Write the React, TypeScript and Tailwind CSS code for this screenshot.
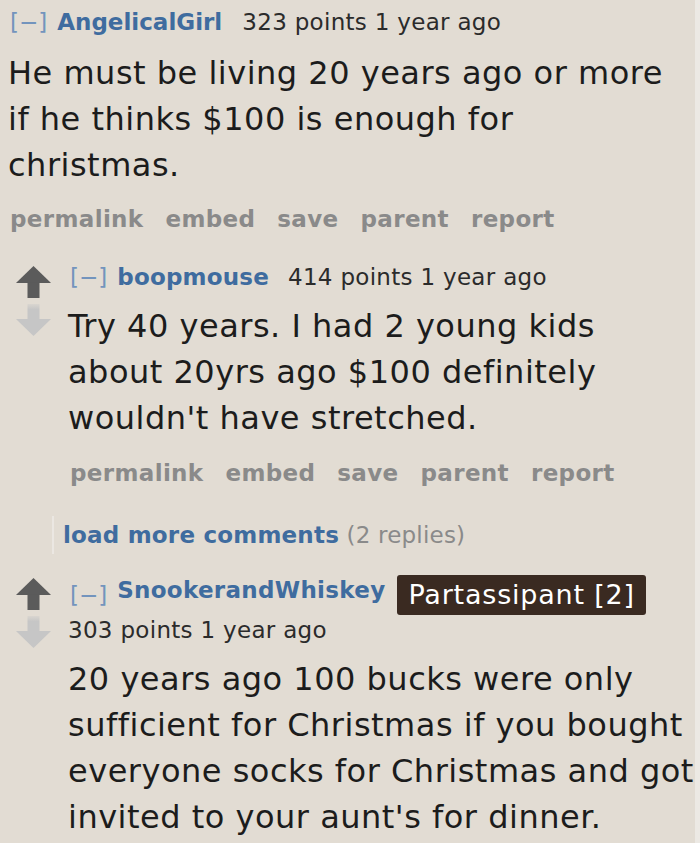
import React from "react";

interface Comment {
  author: string;
  points: number;
  age: string;
  body: string;
  flair?: string;
}

const parentComment: Comment = {
  author: "AngelicalGirl",
  points: 323,
  age: "1 year ago",
  body: "He must be living 20 years ago or more if he thinks $100 is enough for christmas.",
};

const replies: Comment[] = [
  {
    author: "boopmouse",
    points: 414,
    age: "1 year ago",
    body: "Try 40 years. I had 2 young kids about 20yrs ago $100 definitely wouldn't have stretched.",
  },
  {
    author: "SnookerandWhiskey",
    points: 303,
    age: "1 year ago",
    flair: "Partassipant [2]",
    body: "20 years ago 100 bucks were only sufficient for Christmas if you bought everyone socks for Christmas and got invited to your aunt's for dinner.",
  },
];

const buttons = ["permalink", "embed", "save", "parent", "report"];

const UpArrow = () => (
  <svg width="35" height="32" viewBox="0 0 35 32">
    <polygon points="17.5,0 35,17 0,17" fill="#5b5b5b" />
    <rect x="11.5" y="16.5" width="12" height="15.5" fill="#5b5b5b" />
  </svg>
);

const DownArrow = () => (
  <svg width="35" height="32" viewBox="0 0 35 32">
    <defs>
      <linearGradient id="fade" x1="0" y1="0" x2="0" y2="1">
        <stop offset="0" stopColor="#c6c6c6" stopOpacity="0.3" />
        <stop offset="0.35" stopColor="#c6c6c6" stopOpacity="1" />
      </linearGradient>
    </defs>
    <rect x="11.5" y="0" width="12" height="15.5" fill="url(#fade)" />
    <polygon points="0,15 35,15 17.5,32" fill="#c6c6c6" />
  </svg>
);

const Buttons = () => (
  <ul className="flex gap-[22px] text-[23px] leading-[30px] font-bold tracking-[0.35px] text-[#8a8a8a]">
    {buttons.map((b) => (
      <li key={b}>{b}</li>
    ))}
  </ul>
);

const Collapse = () => <span className="font-normal text-[#7394bd]">[−]</span>;

const App: React.FC = () => {
  const [boop, snooker] = replies;

  return (
    <div className="min-h-screen bg-[#ece9e4]" style={{ fontFamily: '"DejaVu Sans", Verdana, sans-serif' }}>
      <div className="w-[695px] min-h-screen bg-[#e2dcd3] pt-[7px] text-[#1c1c1c]">
        {/* top-level comment */}
        <div className="pl-[8px]">
          <div className="flex items-center gap-[10px] pl-[2px] text-[23px] leading-[30px]">
            <Collapse />
            <span className="font-bold text-[#3f6c9f]">{parentComment.author}</span>
            <span className="ml-[10px] tracking-[0.3px] text-[#2b2b2b]">
              {parentComment.points} points {parentComment.age}
            </span>
          </div>
          <p className="mt-[13px] w-[672px] text-[32px] leading-[46px] tracking-[0.5px]">{parentComment.body}</p>
          <div className="mt-[16px] pl-[2px]">
            <Buttons />
          </div>
        </div>

        {/* reply 1 */}
        <div className="mt-[28px] flex">
          <div className="flex w-[68px] shrink-0 flex-col gap-[6px] pl-[16px] pt-[4px]">
            <UpArrow />
            <DownArrow />
          </div>
          <div>
            <div className="flex items-center gap-[10px] pl-[2px] text-[23px] leading-[30px]">
              <Collapse />
              <span className="font-bold tracking-[0.2px] text-[#3f6c9f]">{boop.author}</span>
              <span className="ml-[9px] tracking-[0.3px] text-[#2b2b2b]">
                {boop.points} points {boop.age}
              </span>
            </div>
            <p className="mt-[11px] w-[610px] text-[32px] leading-[46px] tracking-[0.5px]">{boop.body}</p>
            <div className="mt-[17px] pl-[2px]">
              <Buttons />
            </div>
          </div>
        </div>

        <div className="ml-[52px] mt-[28px] border-l-2 border-[#ebe7e2] py-[4px] pl-[9px] text-[23px] leading-[30px] tracking-[0.2px]">
          <span className="font-bold text-[#3f6c9f]">load more comments</span>{" "}
          <span className="text-[#8a8a8a]">(2 replies)</span>
        </div>

        {/* reply 2 */}
        <div className="mt-[21px] flex">
          <div className="flex w-[68px] shrink-0 flex-col gap-[6px] pl-[16px] pt-[3px]">
            <UpArrow />
            <DownArrow />
          </div>
          <div>
            <div className="flex h-[40px] items-center gap-[10px] pl-[2px] text-[23px] leading-[30px]">
              <Collapse />
              <span className="-mt-[10px] font-bold tracking-[0.3px] text-[#3f6c9f]">{snooker.author}</span>
              <span className="ml-[2px] rounded-[3px] bg-[#3a2a21] px-[11px] text-[27px] leading-[40px] tracking-[0.8px] text-white">
                {snooker.flair}
              </span>
            </div>
            <div className="text-[23px] leading-[30px] tracking-[0.3px] text-[#2b2b2b]">
              {snooker.points} points {snooker.age}
            </div>
            <p className="mt-[11px] w-[630px] text-[32px] leading-[46px] tracking-[0.5px]">{snooker.body}</p>
          </div>
        </div>
      </div>
    </div>
  );
};

export default App;
